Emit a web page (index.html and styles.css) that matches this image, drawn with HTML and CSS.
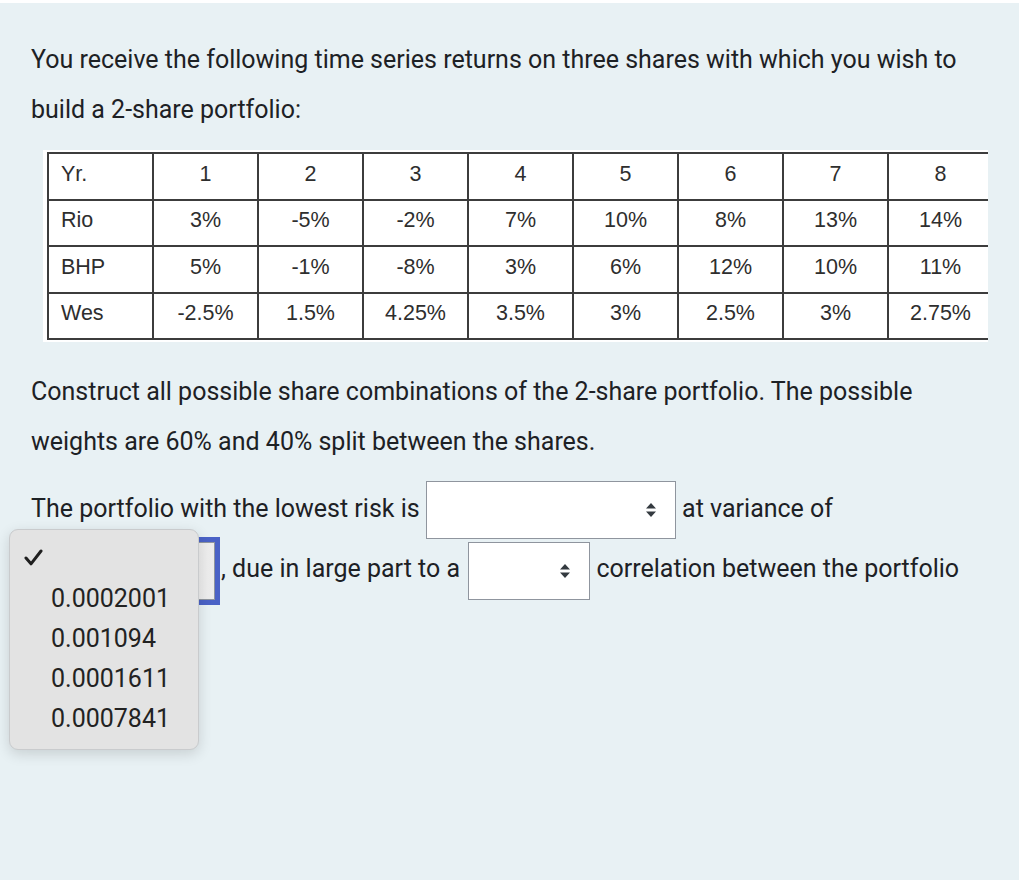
FILE: index.html
```html
<!DOCTYPE html>
<html lang="en">
<head>
<meta charset="utf-8">
<title>Portfolio question</title>
<link rel="stylesheet" href="styles.css">
</head>
<body>
<div class="screen">
  <p class="text">You receive the following time series returns on three shares with which you wish to build a 2-share portfolio:</p>
  <div class="table-box">
    <table class="returns">
      <colgroup><col><col><col><col><col><col><col><col><col></colgroup>
      <tr><td class="name">Yr.</td><td>1</td><td>2</td><td>3</td><td>4</td><td>5</td><td>6</td><td>7</td><td>8</td></tr>
      <tr><td class="name">Rio</td><td>3%</td><td>-5%</td><td>-2%</td><td>7%</td><td>10%</td><td>8%</td><td>13%</td><td>14%</td></tr>
      <tr><td class="name">BHP</td><td>5%</td><td>-1%</td><td>-8%</td><td>3%</td><td>6%</td><td>12%</td><td>10%</td><td>11%</td></tr>
      <tr><td class="name">Wes</td><td>-2.5%</td><td>1.5%</td><td>4.25%</td><td>3.5%</td><td>3%</td><td>2.5%</td><td>3%</td><td>2.75%</td></tr>
    </table>
  </div>
  <p class="text second">Construct all possible share combinations of the 2-share portfolio. The possible weights are 60% and 40% split between the shares.</p>
  <div class="answer">The portfolio with the lowest risk is <span class="select wide"><svg class="arrow" width="10" height="14" viewBox="0 0 10 14"><path d="M5 0 L10 5.5 L0 5.5 Z M0 8.5 L10 8.5 L5 14 Z" fill="#343a40"/></svg></span> at variance of <span class="select focus"></span>, due in large part to a <span class="select narrow"><svg class="arrow" width="10" height="14" viewBox="0 0 10 14"><path d="M5 0 L10 5.5 L0 5.5 Z M0 8.5 L10 8.5 L5 14 Z" fill="#343a40"/></svg></span> correlation between the portfolio</div>

  <div class="menu">
    <div class="item check"><svg width="19" height="17" viewBox="0 0 19 17"><path d="M2 9 L7 14.8 L17 2" fill="none" stroke="#1f1f1f" stroke-width="3" stroke-linecap="round" stroke-linejoin="round"/></svg></div>
    <div class="item">0.0002001</div>
    <div class="item">0.001094</div>
    <div class="item">0.0001611</div>
    <div class="item">0.0007841</div>
  </div>
</div>
</body>
</html>
```

FILE: styles.css
```css
html, body {
  margin: 0;
  padding: 0;
  background: #ffffff;
}

.screen {
  position: relative;
  margin-top: 3px;
  width: 1019px;
  min-height: 877px;
  box-sizing: border-box;
  padding: 32px 0 0 31px;
  background: #e8f1f4;
  font-family: Roboto, "Liberation Sans", sans-serif;
  font-size: 25px;
  color: #1d2125;
}

.text {
  margin: 0;
  width: 960px;
  line-height: 50px;
}

.table-box {
  margin: 15px 0 0 12px;
  width: 945px;
  box-sizing: border-box;
  padding: 2px 0 2px 4px;
  background: #ffffff;
  overflow: hidden;
}

.returns {
  border-collapse: collapse;
  table-layout: fixed;
  width: 945px;
  font-family: "Liberation Sans", Arial, sans-serif;
  font-size: 21.5px;
  color: #2e2e2e;
}

.returns col {
  width: 105px;
}

.returns td {
  height: 40.5px;
  padding: 0 0 4px;
  border: 2px solid #3c3c3c;
  text-align: center;
  vertical-align: middle;
}

.returns td.name {
  text-align: left;
  padding-left: 12px;
}

.second {
  margin-top: 25px;
}

.answer {
  margin-top: 12px;
  width: 960px;
  line-height: 60px;
}

.select {
  position: relative;
  display: inline-block;
  vertical-align: middle;
  height: 58px;
  box-sizing: border-box;
  border: 1px solid #8f959e;
  background: #ffffff;
}

.select.wide {
  width: 250px;
}

.select.narrow {
  width: 122px;
  margin-left: 2px;
}

.select.focus {
  width: 184px;
  margin-right: 6px;
  background: linear-gradient(to right, #ffffff, #ececec);
  outline: 5px solid #4a62c6;
}

.arrow {
  position: absolute;
  right: 19px;
  top: 21px;
}

.menu {
  position: absolute;
  left: 9px;
  top: 526px;
  width: 190px;
  box-sizing: border-box;
  padding: 7px 0 10px;
  background: #e3e3e3;
  border: 1px solid #c9cbcd;
  border-radius: 9px;
  box-shadow: 0 4px 14px rgba(0, 0, 0, 0.14);
  font-size: 25px;
  color: #222222;
}

.item {
  height: 40px;
  line-height: 40px;
  padding-left: 41px;
}

.item.check {
  display: flex;
  align-items: center;
  padding-left: 14px;
  margin-bottom: 2px;
}
```
